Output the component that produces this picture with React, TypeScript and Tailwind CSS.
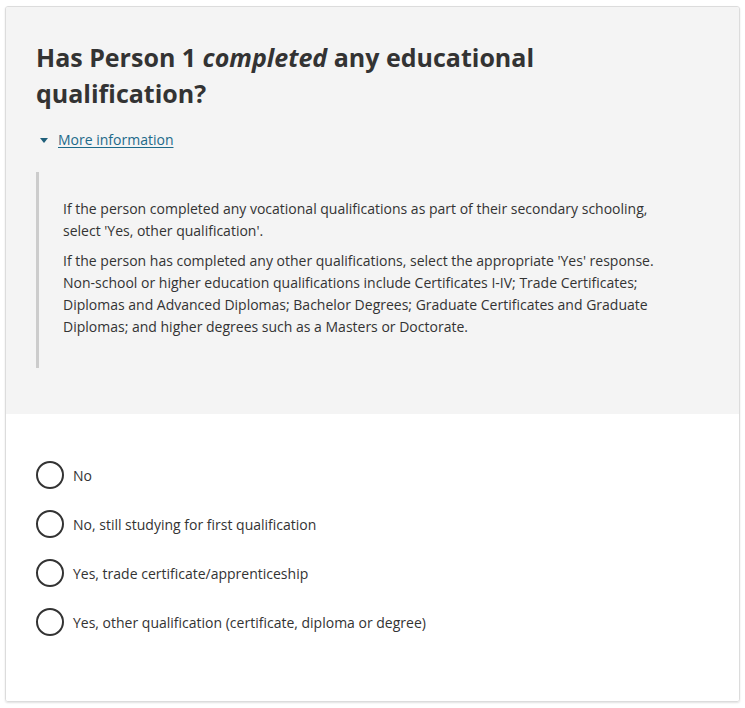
const options = [
  "No",
  "No, still studying for first qualification",
  "Yes, trade certificate/apprenticeship",
  "Yes, other qualification (certificate, diploma or degree)",
];

export default function App() {
  return (
    <div
      className="w-[745px] h-[708px] bg-white pt-[6px] px-[5px] text-[#333]"
      style={{ fontFamily: "'Open Sans', 'Noto Sans', sans-serif" }}
    >
      <div className="h-[696px] rounded-[3px] border border-[#dcdcdc] shadow-[0_1px_2px_rgba(0,0,0,0.12)] overflow-hidden flex flex-col">
        {/* question header */}
        <div className="bg-[#f4f4f4] px-[30px] pt-[32px] pb-[46px]">
          <h1 className="text-[25px] leading-[36px] font-bold text-[#333]">
            Has Person 1 <em>completed</em> any educational
            <br />
            qualification?
          </h1>

          <div className="mt-[19px] flex items-center gap-[10px] pl-[4px] text-[14px] leading-[20px]">
            <svg width="8" height="5" viewBox="0 0 8 5" className="shrink-0">
              <path d="M0 0 L8 0 L4 5 Z" fill="#1f5f7a" />
            </svg>
            <a href="#" className="text-[#1d6a8a] underline underline-offset-2">
              More information
            </a>
          </div>

          <div className="mt-[22px] border-l-[3px] border-[#cccccc] pl-[24px] pr-[10px] pt-[26px] pb-[30px] text-[14px] leading-[22px] text-[#333]">
            <p>
              If the person completed any vocational qualifications as part of their secondary schooling,
              <br />
              select 'Yes, other qualification'.
            </p>
            <p className="mt-[8px]">
              If the person has completed any other qualifications, select the appropriate 'Yes' response.
              <br />
              Non-school or higher education qualifications include Certificates I-IV; Trade Certificates;
              <br />
              Diplomas and Advanced Diplomas; Bachelor Degrees; Graduate Certificates and Graduate
              <br />
              Diplomas; and higher degrees such as a Masters or Doctorate.
            </p>
          </div>
        </div>

        {/* answers */}
        <div className="flex-1 bg-white px-[30px] pt-[47px] flex flex-col gap-[21px]">
          {options.map((o) => (
            <label key={o} className="flex items-center gap-[9px] text-[14px] text-[#333] cursor-pointer">
              <span className="w-[28px] h-[28px] rounded-full border-2 border-[#333] shrink-0" />
              {o}
            </label>
          ))}
        </div>
      </div>
    </div>
  );
}
